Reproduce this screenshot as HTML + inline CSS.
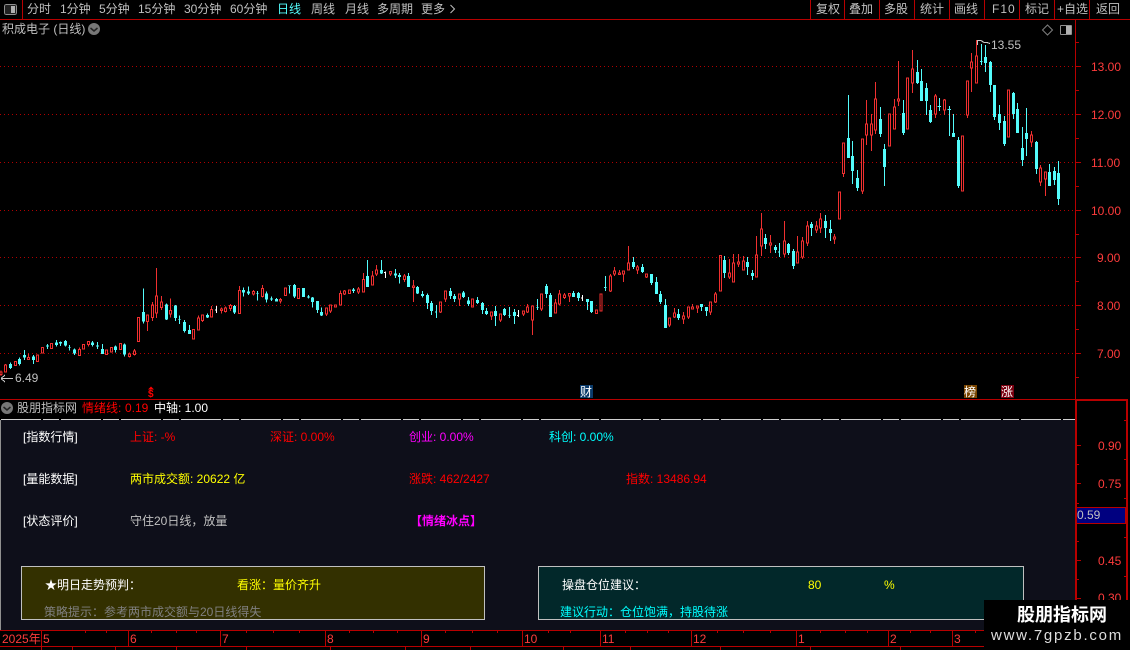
<!DOCTYPE html>
<html><head><meta charset="utf-8"><style>
html,body{margin:0;padding:0;background:#000;width:1130px;height:650px;overflow:hidden}
#r{position:relative;width:1130px;height:650px;overflow:hidden;background:#000;font:12px/14px "Liberation Sans","WenQuanYi Zen Hei","Noto Sans CJK SC",sans-serif;color:#c0c0c0}
#r span{position:absolute;white-space:nowrap}
.d{position:absolute}
svg{position:absolute;left:0;top:0}
.re{color:#f00}.ax{color:#ff3c3c;font-size:12px}.y{color:#ff0}.m{color:#f0f}.c{color:#0ff}.w{color:#fff}
</style></head><body><div id="r">
<div class="d" style="left:1px;top:420px;width:1074px;height:210px;background:#0e0f1a"></div>
<div class="d" style="left:21px;top:566px;width:462px;height:52px;background:#333000;border:1px solid #c0c0c0"></div>
<div class="d" style="left:538px;top:566px;width:484px;height:52px;background:#02282a;border:1px solid #c0c0c0"></div>
<svg width="1130" height="650" shape-rendering="crispEdges" fill="none">
<g stroke="#b00000" stroke-width="1" stroke-dasharray="1 3">
<path d="M0 66.5H1076M0 114.5H1076M0 162.5H1076M0 210.5H1076M0 257.5H1076M0 305.5H1076M0 353.5H1076"/>
</g>
<path stroke="#b80000" d="M0 19.5H1130M22.5 0V19M810.5 0V19M844.5 0V19M879.5 0V19M914.5 0V19M949.5 0V19M984.5 0V19M1019.5 0V19M1054.5 0V19M1089.5 0V19M1075.5 19V399M0 399.5H1076M1076 66.5h5M1076 114.5h5M1076 162.5h5M1076 210.5h5M1076 257.5h5M1076 305.5h5M1076 353.5h5M1076 90.5h3M1076 138.5h3M1076 186.5h3M1076 234.5h3M1076 281.5h3M1076 329.5h3M1076 42.5h3M1076 377.5h3"/>
<path stroke="#b80000" stroke-width="2" d="M1076 400V630M1075 400H1128M1127 399V630M1076 630H1128"/>
<path stroke="#b80000" d="M1076 445.5h5M1076 483.5h5M1076 522.5h5M1076 560.5h5M1076 598.5h5M1076 464.5h3M1076 503.5h3M1076 541.5h3M1076 579.5h3M1127 420.5h-3M1127 459.5h-3M1127 498.5h-3M1127 537.5h-3M1127 576.5h-3"/>
<path stroke="#b80000" d="M0 630.5H1130M0 646.5H1130M41.5 630V650M128.5 630V646M220.5 630V646M325.5 630V646M421.5 630V646M522.5 630V646M600.5 630V646M691.5 630V646M796.5 630V646M888.5 630V646M952.5 630V646M72.5 646V650M115.5 646V650M176.5 646V650M246.5 646V650M330.5 646V650M405.5 646V650M470.5 646V650M563.5 646V650M630.5 646V650M720.5 646V650M810.5 646V650M900.5 646V650M85.5 630v3M106.5 630v3M151.5 630v3M176.5 630v3M196.5 630v3M246.5 630v3M273.5 630v3M299.5 630v3M349.5 630v3M373.5 630v3M397.5 630v3M445.5 630v3M472.5 630v3M497.5 630v3M548.5 630v3M570.5 630v3M625.5 630v3M647.5 630v3M668.5 630v3M717.5 630v3M743.5 630v3M770.5 630v3M820.5 630v3M845.5 630v3M867.5 630v3M910.5 630v3M930.5 630v3M975.5 630v3"/>
<path stroke="#d0d0d0" stroke-dasharray="40 2 16 2" d="M1 419.5H1075"/>
<path stroke="#909090" d="M0.5 420V630"/>

<!-- candles 1 -->
<g transform="translate(0,240) scale(.33333)">
<path stroke="#f03030" stroke-width="3" d="M3 392V396M3 404V408M3 396m-3 0h6V404h-6zM17 372V375M17 396V397M17 375m-3 0h6V396h-6zM46 364m-3 0h6V377h-6zM85 340V353M85 353m-3 0h6V358h-6zM113 345m-3 0h6V365h-6zM127 322m-3 0h6V339h-6zM154 310m-3 0h6V325h-6zM238 322V328M238 328m-3 0h6V347h-6zM250 313m-3 0h6V327h-6zM265 304m-3 0h6V313h-6zM265 313V320M319 330m-3 0h6V344h-6zM334 322m-3 0h6V336h-6zM361 310m-3 0h6V328h-6zM388 338V342M388 350V353M388 342m-3 0h6V350h-6zM403 327V333M403 344V346M403 333m-3 0h6V344h-6zM415 232m-3 0h6V305h-6zM442 225m-3 0h6V245h-6zM442 245V273M457 186V195M457 233V243M457 195m-3 0h6V233h-6zM469 84V168M469 219V234M469 168m-3 0h6V219h-6zM484 168V186M484 202V210M484 186m-3 0h6V202h-6zM511 175V212M511 222V232M511 212m-3 0h6V222h-6zM580 268m-3 0h6V297h-6zM595 226V234M595 234m-3 0h6V270h-6zM607 225m-3 0h6V241h-6zM607 241V246M634 198V208M634 208m-3 0h6V231h-6zM664 203V207M664 211V221M664 207m-3 0h6V211h-6zM676 200V204M676 214V218M676 204m-3 0h6V214h-6zM691 192V196M691 206V213M691 196m-3 0h6V206h-6zM718 138V151M718 151m-3 0h6V221h-6zM760 150V155M760 162V167M760 155m-3 0h6V162h-6zM787 135V145M787 169V172M787 145m-3 0h6V169h-6zM841 174V178M841 183V191M841 178m-3 0h6V183h-6zM856 144m-3 0h6V167h-6zM895 146m-3 0h6V176h-6z"/>
<path stroke="#54fcfc" stroke-width="3" d="M31 368V387M58 353V377M73 330V360M100 345V372M142 312V327M169 300V320M181 305V318M196 300V320M208 315V332M223 326V345M277 303V320M292 306V327M307 312V342M346 317V338M373 310V349M430 145V251M499 190V240M526 195V243M538 226V252M553 240V277M568 255V282M622 220V234M703 195V222M730 143V170M745 139V165M772 153V182M799 155V188M814 169V183M829 174V185M868 136V161M883 132V174"/>
<path stroke="#54fcfc" stroke-width="9" d="M31 372V384M58 357V372M73 345V352M100 350V360M142 316V320M169 307V315M181 306V310M196 303V317M208 321V323M223 328V340M277 308V315M292 317V319M307 327V342M346 320V330M373 314V344M430 216V244M499 194V238M526 197V234M538 238V240M553 246V273M568 270V282M622 225V232M703 198V218M730 150V158M745 154V160M772 159V161M799 160V178M814 176V179M829 177V184M868 136V138M883 135V170"/>
<path stroke="#fff" stroke-width="3" d="M649 198V219M645 210H649"/>
</g>
<!-- candles 2 -->
<g transform="translate(300,230) scale(.33333)">
<path stroke="#f03030" stroke-width="3" d="M79 234m-3 0h6V252h-6zM79 252V258M91 225m-3 0h6V243h-6zM91 243V249M106 225m-3 0h6V231h-6zM121 181V190M121 225V227M121 190m-3 0h6V225h-6zM133 180V183M133 192V195M133 183m-3 0h6V192h-6zM148 180m-3 0h6V190h-6zM175 171V177M175 186V192M175 177m-3 0h6V186h-6zM190 129V148M190 148m-3 0h6V186h-6zM217 123V138M217 138m-3 0h6V165h-6zM229 105V120M229 132V138M229 120m-3 0h6V132h-6zM271 123V125M271 132V138M271 125m-3 0h6V132h-6zM313 132V138M313 148V156M313 138m-3 0h6V148h-6zM340 150V168M340 173V216M340 168m-3 0h6V173h-6zM421 216m-3 0h6V246h-6zM421 246V249M436 183m-3 0h6V207h-6zM436 207V216M478 192m-3 0h6V207h-6zM478 207V228M517 207m-3 0h6V231h-6zM574 246m-3 0h6V258h-6zM574 258V270M601 252m-3 0h6V270h-6zM601 270V276M670 243m-3 0h6V252h-6zM670 252V258M682 222V231M682 246V249M682 231m-3 0h6V246h-6zM697 228m-3 0h6V270h-6zM697 270V315M724 192m-3 0h6V237h-6zM724 237V243M766 207V219M766 219m-3 0h6V249h-6zM778 180V192M778 222V226M778 192m-3 0h6V222h-6zM793 189V195M793 202V207M793 195m-3 0h6V202h-6zM808 190m-3 0h6V198h-6zM808 198V216M889 240m-3 0h6V251h-6z"/>
<path stroke="#54fcfc" stroke-width="3" d="M11 174V201M25 195V206M38 201V232M52 213V249M64 232V258M160 174V189M202 90V171M244 90V132M286 117V144M298 129V160M325 129V171M352 168V192M367 183V202M382 190V237M394 213V255M409 225V264M405 246H409M451 174V207M463 192V216M490 183V204M505 201V228M532 201V222M547 216V252M559 234V255M586 228V288M613 234V258M628 231V264M643 237V282M712 207V240M739 162V204M751 189V261M820 183V201M835 186V213M862 207V240M874 213V249"/>
<path stroke="#54fcfc" stroke-width="9" d="M11 174V201M25 199V203M38 203V216M52 213V240M64 246V257M160 179V183M202 138V171M244 120V130M286 131V137M298 135V141M325 138V171M352 171V190M367 192V198M382 195V219M394 219V243M451 183V198M463 198V207M490 187V201M505 212V222M532 210V219M547 219V240M559 243V252M586 243V258M613 237V255M628 256V258M643 246V258M712 232V234M739 168V192M751 195V261M820 189V201M835 189V204M862 207V216M874 213V246"/>
<path stroke="#fff" stroke-width="3" d="M256 124V144M252 128H256M655 240V261M651 257H655M847 195V213M843 204H847"/>
</g>
<!-- candles 3 -->
<g transform="translate(600,200) scale(.33333)">
<path stroke="#f03030" stroke-width="3" d="M3 282m-3 0h6V333h-6zM31 222V228M31 273V276M31 228m-3 0h6V273h-6zM43 201V213M43 222V228M43 213m-3 0h6V222h-6zM58 210V219M58 219m-3 0h6V224h-6zM70 213m-3 0h6V222h-6zM70 222V246M85 138V189M85 189m-3 0h6V210h-6zM112 195V201M112 210V222M112 201m-3 0h6V210h-6zM139 222m-3 0h6V231h-6zM139 231V234M208 354m-3 0h6V375h-6zM208 375V381M223 324V339M223 351V354M223 339m-3 0h6V351h-6zM250 336V348M250 357V372M250 348m-3 0h6V357h-6zM265 321m-3 0h6V351h-6zM265 351V357M277 312V321M277 321m-3 0h6V327h-6zM292 318m-3 0h6V324h-6zM292 324V339M331 306m-3 0h6V336h-6zM331 336V345M346 276V282M346 306V309M346 282m-3 0h6V306h-6zM361 166m-3 0h6V273h-6zM388 177V219M388 231V237M388 219m-3 0h6V231h-6zM400 162V189M400 189m-3 0h6V246h-6zM415 162V186M415 192V201M415 186m-3 0h6V192h-6zM430 168V183M430 183m-3 0h6V210h-6zM469 108V165M469 165m-3 0h6V231h-6zM484 39V87M484 138V168M484 87m-3 0h6V138h-6zM511 105V129M511 135V159M511 129m-3 0h6V135h-6zM553 63V123M553 162V171M553 123m-3 0h6V162h-6zM592 108V156M592 156m-3 0h6V189h-6zM607 111V123M607 171V177M607 123m-3 0h6V171h-6zM622 63V78M622 129V138M622 78m-3 0h6V129h-6zM649 63V78M649 90V99M649 78m-3 0h6V90h-6zM661 39V57M661 84V99M661 57m-3 0h6V84h-6zM703 102V111M703 117V132M703 111m-3 0h6V117h-6z"/>
<path stroke="#54fcfc" stroke-width="3" d="M16 228V273M12 262H20M100 171V207M127 192V219M154 222V255M169 231V282M181 273V312M196 297V384M235 327V360M304 312V333M319 321V348M373 168V234M442 171V225M457 210V240M496 102V147M526 135V159M538 129V171M534 156H538M565 129V165M580 147V207M634 66V108M676 45V114M691 60V123"/>
<path stroke="#54fcfc" stroke-width="9" d="M100 186V201M127 201V216M154 222V249M169 246V282M181 282V306M196 315V384M235 342V354M304 312V321M319 321V333M373 180V219M442 186V201M457 219V228M496 114V132M526 141V150M565 132V159M580 153V198M634 72V84M676 63V84M691 87V99"/>
</g>
<!-- candles 4 -->
<g transform="translate(830,40) scale(.33333)">
<path stroke="#f03030" stroke-width="3" d="M28 456m-3 0h6V537h-6zM40 309m-3 0h6V401h-6zM40 401V411M97 297m-3 0h6V453h-6zM97 453V462M109 180V252M109 285V315M109 252m-3 0h6V285h-6zM124 222V252M124 285V333M124 252m-3 0h6V285h-6zM136 126V177M136 270V282M136 177m-3 0h6V270h-6zM178 222m-3 0h6V318h-6zM193 177V201M193 201m-3 0h6V267h-6zM205 63V177M205 183V198M205 177m-3 0h6V183h-6zM232 114m-3 0h6V267h-6zM247 30V87M247 129V159M247 87m-3 0h6V129h-6zM316 162V168M316 222V234M316 168m-3 0h6V222h-6zM343 177V180M343 210V225M343 180m-3 0h6V210h-6zM397 288m-3 0h6V453h-6zM412 123m-3 0h6V225h-6zM412 225V234M424 39V66M424 84V156M424 66m-3 0h6V84h-6zM439 0V48M439 48m-3 0h6V129h-6zM535 150m-3 0h6V291h-6zM604 273V285M604 306V321M604 285m-3 0h6V306h-6zM631 375V384M631 426V438M631 384m-3 0h6V426h-6zM646 396m-3 0h6V417h-6zM646 417V468"/>
<path stroke="#54fcfc" stroke-width="3" d="M55 165V354M67 303V432M82 390V453M151 201V291M163 312V438M220 180V285M262 60V132M274 87V183M289 129V225M301 195V249M328 174V213M323 199H333M358 198V288M353 208H363M370 222V291M385 291V444M454 12V75M450 64H458M466 15V96M481 63V156M493 135V240M508 195V270M523 228V318M550 156V237M562 189V279M577 261V378M589 204V348M619 303V402M658 372V438M673 381V435M685 363V495"/>
<path stroke="#54fcfc" stroke-width="9" d="M55 294V354M67 348V393M82 414V444M151 237V282M163 327V381M220 219V279M262 96V129M274 123V183M289 144V183M301 210V246M370 279V291M385 300V438M466 51V69M481 66V135M493 135V231M508 222V249M523 243V312M550 159V222M562 207V279M577 324V360M589 279V297M619 306V387M658 396V438M673 393V420M685 399V477"/>
</g>
<path stroke="#c8c8c8" d="M977.5 40V45M977 40.5H981L984 42.5H987L990 43.5"/>
<path stroke="#c8c8c8" d="M1 378.5H13M1 378.5L5 375M1 378.5L5 382"/>
<!-- icons -->
<rect x="4.5" y="4.5" width="12" height="10" rx="2" stroke="#909090" fill="#222"/><rect x="11" y="6" width="4" height="7" fill="#b0b0b0"/>
<rect x="1060.5" y="25.5" width="11" height="9" rx="1" stroke="#909090"/><rect x="1066" y="26" width="5" height="8" fill="#b0b0b0"/>
<path stroke="#808080" shape-rendering="auto" d="M1047.5 25L1052.5 30L1047.5 35L1042.5 30Z"/>
<g shape-rendering="auto">
<circle cx="94" cy="29" r="6" fill="#777"/><path d="M90.5 28L94 31L97.5 28" stroke="#222" stroke-width="1.5"/>
<circle cx="7" cy="408" r="6" fill="#777"/><path d="M3.5 407L7 410L10.500 407" stroke="#222" stroke-width="1.5"/>
<path d="M151 386.5L148 389.5H154Z" fill="#f00"/>
<path d="M450.5 5L454.5 9L450.5 13" stroke="#c0c0c0"/>
</g>
<rect x="580" y="385" width="13" height="13" fill="#0a3a6a"/>
<rect x="964" y="385" width="13" height="13" fill="#7a4500"/>
<rect x="1001" y="385" width="13" height="13" fill="#7a0010"/>
<rect x="1076.5" y="507.5" width="49" height="16" fill="#000080" stroke="#b80000"/>
</svg>

<span style="left:27px;top:2px">分时</span>
<span style="left:60px;top:2px">1分钟</span>
<span style="left:99px;top:2px">5分钟</span>
<span style="left:138px;top:2px">15分钟</span>
<span style="left:184px;top:2px">30分钟</span>
<span style="left:230px;top:2px">60分钟</span>
<span style="left:277px;top:2px;color:#54fcfc">日线</span>
<span style="left:311px;top:2px">周线</span>
<span style="left:345px;top:2px">月线</span>
<span style="left:377px;top:2px">多周期</span>
<span style="left:421px;top:2px">更多</span>
<span style="left:816px;top:2px">复权</span>
<span style="left:849px;top:2px">叠加</span>
<span style="left:884px;top:2px">多股</span>
<span style="left:920px;top:2px">统计</span>
<span style="left:954px;top:2px">画线</span>
<span style="left:992px;top:2px;letter-spacing:1px">F10</span>
<span style="left:1025px;top:2px">标记</span>
<span style="left:1057px;top:2px">+自选</span>
<span style="left:1096px;top:2px">返回</span>
<span style="left:2px;top:22px">积成电子 (日线)</span>
<span style="left:991px;top:38px">13.55</span>
<span style="left:15px;top:371px">6.49</span>
<span class="ax" style="left:1091px;top:60px">13.00</span>
<span class="ax" style="left:1091px;top:108px">12.00</span>
<span class="ax" style="left:1091px;top:156px">11.00</span>
<span class="ax" style="left:1091px;top:204px">10.00</span>
<span class="ax" style="left:1097px;top:251px">9.00</span>
<span class="ax" style="left:1097px;top:299px">8.00</span>
<span class="ax" style="left:1097px;top:347px">7.00</span>
<span style="left:148px;top:390px;color:#f00;font-weight:bold;font-size:10px;line-height:9px">$</span>
<span class="w" style="left:580px;top:385px">财</span>
<span class="w" style="left:964px;top:385px">榜</span>
<span class="w" style="left:1001px;top:385px">涨</span>

<span style="left:17px;top:401px">股朋指标网</span>
<span class="re" style="left:82px;top:401px">情绪线:</span>
<span class="re" style="left:125px;top:401px">0.19</span>
<span class="w" style="left:154px;top:401px">中轴: 1.00</span>

<span class="w" style="left:23px;top:430px">[指数行情]</span>
<span class="re" style="left:130px;top:430px">上证: -%</span>
<span class="re" style="left:270px;top:430px">深证: 0.00%</span>
<span class="m" style="left:409px;top:430px">创业: 0.00%</span>
<span class="c" style="left:549px;top:430px">科创: 0.00%</span>
<span class="w" style="left:23px;top:472px">[量能数据]</span>
<span class="y" style="left:130px;top:472px">两市成交额: 20622 亿</span>
<span class="re" style="left:409px;top:472px">涨跌: 462/2427</span>
<span class="re" style="left:626px;top:472px">指数: 13486.94</span>
<span class="w" style="left:23px;top:514px">[状态评价]</span>
<span style="left:130px;top:514px">守住20日线，放量</span>
<span class="m" style="left:410px;top:514px;font-weight:bold">【情绪冰点】</span>

<span class="w" style="left:45px;top:578px">★明日走势预判：</span>
<span class="y" style="left:237px;top:578px">看涨：量价齐升</span>
<span style="left:44px;top:605px;color:#808080">策略提示：参考两市成交额与20日线得失</span>
<span class="w" style="left:562px;top:578px">操盘仓位建议：</span>
<span class="y" style="left:808px;top:578px">80</span>
<span class="y" style="left:884px;top:578px">%</span>
<span class="c" style="left:560px;top:605px">建议行动：仓位饱满，持股待涨</span>

<span class="ax" style="left:1098px;top:439px">0.90</span>
<span class="ax" style="left:1098px;top:477px">0.75</span>
<span class="ax" style="left:1098px;top:554px">0.45</span>
<span class="ax" style="left:1098px;top:591px">0.30</span>
<span style="left:1077px;top:508px">0.59</span>

<span class="ax" style="left:2px;top:632px">2025年</span>
<span class="ax" style="left:43px;top:632px">5</span>
<span class="ax" style="left:130px;top:632px">6</span>
<span class="ax" style="left:222px;top:632px">7</span>
<span class="ax" style="left:327px;top:632px">8</span>
<span class="ax" style="left:423px;top:632px">9</span>
<span class="ax" style="left:524px;top:632px">10</span>
<span class="ax" style="left:602px;top:632px">11</span>
<span class="ax" style="left:693px;top:632px">12</span>
<span class="ax" style="left:798px;top:632px">1</span>
<span class="ax" style="left:890px;top:632px">2</span>
<span class="ax" style="left:954px;top:632px">3</span>

<div class="d" style="left:984px;top:600px;width:146px;height:50px;background:#000"></div>
<span class="w" style="left:1017px;top:603px;font-size:18px;line-height:22px;font-weight:bold;font-family:'Noto Sans CJK SC',sans-serif">股朋指标网</span>
<span style="left:991px;top:627px;font-size:15px;line-height:18px;color:#ddd;letter-spacing:1.75px">www.7gpzb.com</span>
</div></body></html>
